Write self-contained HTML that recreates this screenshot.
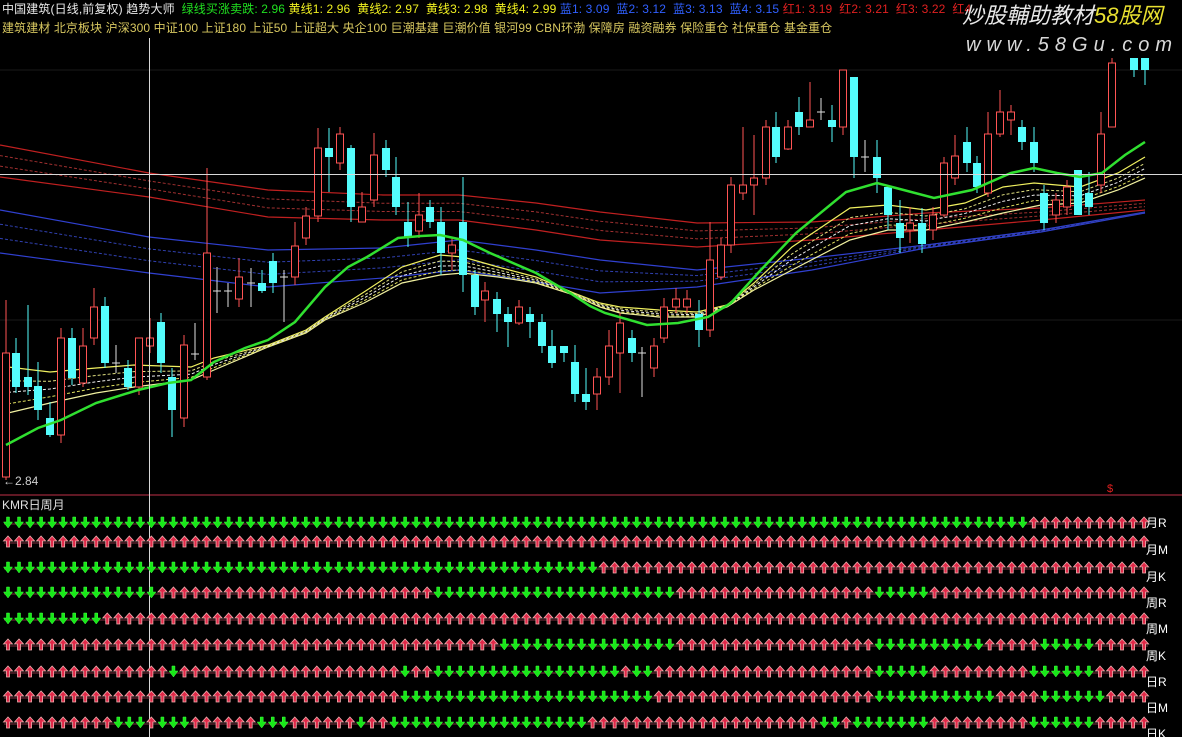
<!DOCTYPE html>
<html><head><meta charset="utf-8">
<style>
html,body{margin:0;padding:0;background:#000;width:1182px;height:737px;overflow:hidden;font-family:"Liberation Sans","Noto Sans CJK SC",sans-serif;}
#wrap{position:relative;width:1182px;height:737px;}
.t{position:absolute;white-space:nowrap;font-size:12px;line-height:14px;}
svg{position:absolute;left:0;top:0;}
</style></head><body><div id="wrap">
<svg id="s" width="1182" height="737" viewBox="0 0 1182 737"></svg>
<div class="t" style="left:2px;top:2px;color:#e8e8e8;letter-spacing:0.12px">中国建筑(日线,前复权) 趋势大师 <span style="color:#20e020">&nbsp;绿线买涨卖跌: 2.96</span> <span style="color:#f0f020">黄线1: 2.96 &nbsp;黄线2: 2.97 &nbsp;黄线3: 2.98 &nbsp;黄线4: 2.99</span> <span style="color:#3060ff">蓝1: 3.09 &nbsp;蓝2: 3.12 &nbsp;蓝3: 3.13 &nbsp;蓝4: 3.15</span> <span style="color:#e02020">红1: 3.19 &nbsp;红2: 3.21 &nbsp;红3: 3.22 &nbsp;红4</span></div>
<div class="t" style="left:2px;top:21px;color:#d8c860;letter-spacing:0.1px">建筑建材 北京板块 沪深300 中证100 上证180 上证50 上证超大 央企100 巨潮基建 巨潮价值 银河99 CBN环渤 保障房 融资融券 保险重仓 社保重仓 基金重仓</div>
<div class="t" style="left:962px;top:3px;font-size:22px;line-height:26px;font-style:italic;color:#e8e8e8">炒股輔助教材<span style="color:#e8e030">58股网</span></div>
<div class="t" style="left:966px;top:33px;font-size:20px;line-height:24px;font-style:italic;color:#d8d8d8;letter-spacing:6px">www.58Gu.com</div>
<div class="t" style="left:3px;top:474px;color:#d0d0d0">←2.84</div>
<div class="t" style="left:2px;top:498px;color:#e0e0e0">KMR日周月</div>
<div class="t" style="left:1107px;top:482px;color:#e02020;font-size:11px">$</div>
<div class="t" style="left:1146px;top:516px;color:#fff">月R</div>
<div class="t" style="left:1146px;top:543px;color:#fff">月M</div>
<div class="t" style="left:1146px;top:570px;color:#fff">月K</div>
<div class="t" style="left:1146px;top:596px;color:#fff">周R</div>
<div class="t" style="left:1146px;top:622px;color:#fff">周M</div>
<div class="t" style="left:1146px;top:649px;color:#fff">周K</div>
<div class="t" style="left:1146px;top:675px;color:#fff">日R</div>
<div class="t" style="left:1146px;top:701px;color:#fff">日M</div>
<div class="t" style="left:1146px;top:727px;color:#fff">日K</div>
</div>
<script>
var S=document.getElementById('s'),h='';
function pl(pts,col,w,dash){h+='<polyline fill="none" stroke="'+col+'" stroke-width="'+w+'"'+(dash?' stroke-dasharray="'+dash+'"':'')+' points="'+pts.map(function(p){return p.join(',')}).join(' ')+'"/>';}
function mix(a,b,t){var r=[];for(var i=0;i<a.length;i++)r.push([a[i][0],a[i][1]+(b[i][1]-a[i][1])*t]);return r;}
h+='<line x1="0" y1="70" x2="1182" y2="70" stroke="#1a1a1a"/><line x1="0" y1="320" x2="1182" y2="320" stroke="#1a1a1a"/>';
h+='<line x1="0" y1="495" x2="1182" y2="495" stroke="#802030" stroke-width="1.5"/>';
var redT=[[0,145],[149,173],[268,190],[383,195],[459,195],[536,203],[600,212],[697,223],[812,222],[926,213],[1041,208],[1145,200]];
var redB=[[0,177],[149,197],[268,217],[383,220],[459,220],[536,230],[600,240],[697,247],[812,240],[926,230],[1041,220],[1145,210]];
var bluT=[[0,210],[149,237],[268,250],[383,248],[459,240],[536,250],[600,260],[697,270],[812,258],[926,245],[1041,230],[1145,212]];
var bluB=[[0,253],[149,273],[268,287],[383,278],[459,270],[536,282],[600,293],[697,287],[812,270],[926,248],[1041,232],[1145,213]];
pl(redT,'#c02020',1.2);pl(redB,'#c02020',1.2);
pl(mix(redT,redB,.33),'#a03030',1,'3,2');pl(mix(redT,redB,.66),'#a03030',1,'3,2');
pl(bluT,'#3040d0',1.2);pl(bluB,'#3040d0',1.2);
pl(mix(bluT,bluB,.33),'#3040b0',1,'3,2');pl(mix(bluT,bluB,.66),'#3040b0',1,'3,2');
var yT=[[8,367],[50,372],[96,368],[134,365],[191,367],[214,358],[268,345],[306,330],[325,317],[364,292],[402,267],[440,255],[463,257],[498,267],[536,277],[574,293],[600,303],[620,307],[659,310],[697,312],[727,305],[754,283],[792,247],[850,208],[888,205],[926,210],[965,203],[1003,187],[1034,183],[1080,187],[1118,173],[1145,157]];
var yB=[[8,413],[50,403],[96,393],[134,387],[191,380],[214,370],[268,347],[306,333],[325,320],[364,303],[402,283],[440,275],[463,273],[498,277],[536,283],[574,295],[600,307],[620,313],[659,317],[697,317],[727,307],[754,290],[792,270],[850,240],[888,230],[926,230],[965,222],[1003,213],[1041,205],[1080,203],[1118,190],[1145,178]];
pl(yT,'#f0f060',1.2);pl(yB,'#f0f0a0',1.2);
pl(mix(yT,yB,.3),'#e0e080',1,'3,2');pl(mix(yT,yB,.55),'#f0f0f0',1,'3,2');pl(mix(yT,yB,.8),'#e0e060',1,'3,2');
var C=[
[6,'r',353,477,300,480],[16,'c',353,387,338,393],[28,'c',377,387,305,395],[38,'c',386,410,362,420],[50,'c',418,435,402,437],
[61,'r',338,435,328,443],[72,'c',338,378,328,385],[83,'r',346,383,328,387],[94,'r',307,338,288,345],[105,'c',306,363,297,368],
[116,'x',363,363,345,373],[128,'c',368,387,360,390],[139,'r',338,387,338,395],[150,'r',338,346,318,353],[161,'c',322,363,313,373],
[172,'c',377,410,368,437],[184,'r',345,418,335,427],[195,'x',354,354,323,360],[207,'r',253,377,168,380],[217,'x',291,291,267,313],
[228,'x',291,291,283,307],[239,'r',277,299,258,307],[251,'x',283,283,268,307],[262,'c',283,291,270,293],[273,'c',261,283,253,293],
[284,'x',277,277,270,322],[295,'r',246,277,222,285],[306,'r',216,238,207,245],[318,'r',148,216,128,222],[329,'c',148,157,128,192],
[340,'r',134,163,127,170],[351,'c',148,207,145,222],[362,'r',207,222,192,222],[374,'r',155,200,133,207],[386,'c',148,170,140,177],
[396,'c',177,207,157,215],[408,'c',222,238,202,247],[419,'r',215,231,193,238],[430,'c',207,222,200,228],[441,'c',222,253,207,275],
[452,'r',245,253,238,270],[463,'c',222,275,177,292],[475,'c',275,307,270,315],[485,'r',291,300,282,322],[497,'c',299,314,292,332],
[508,'c',314,322,307,347],[519,'r',307,323,300,325],[530,'c',314,322,307,338],[542,'c',322,346,314,353],[552,'c',346,363,330,368],
[564,'c',346,353,346,362],[575,'c',362,394,345,402],[586,'c',394,402,368,410],[597,'r',377,394,368,410],[609,'r',346,377,330,385],
[620,'r',323,353,313,393],[632,'c',338,353,330,362],[642,'x',353,353,347,397],[654,'r',346,368,338,377],[664,'r',307,338,298,343],
[676,'r',299,307,288,313],[687,'r',299,307,290,313],[699,'c',314,330,300,347],[710,'r',260,330,222,337],[721,'r',245,277,238,280],
[731,'r',185,245,177,253],[743,'r',185,193,127,200],[754,'r',178,185,135,215],[766,'r',127,178,120,185],[776,'c',127,157,112,163],
[788,'r',127,149,120,150],[799,'c',112,127,97,135],[810,'r',120,127,82,127],[821,'x',112,112,98,120],[832,'c',120,127,105,142],
[843,'r',70,127,70,135],[854,'c',77,157,77,178],[865,'x',157,157,140,172],[877,'c',157,178,140,193],[888,'c',187,215,185,230],
[900,'c',223,238,200,253],[910,'r',223,230,207,243],[922,'c',223,244,208,253],[933,'r',215,230,207,240],[944,'r',163,215,157,217],
[955,'r',156,178,135,185],[967,'c',142,163,127,172],[977,'c',163,187,156,193],[988,'r',134,193,112,197],[1000,'r',112,134,90,137],
[1011,'r',112,120,105,135],[1022,'c',127,142,120,150],[1034,'c',142,163,127,172],[1044,'c',193,223,185,230],[1056,'r',200,215,193,223],
[1067,'r',187,207,180,215],[1078,'c',170,215,170,215],[1089,'c',193,207,172,215],[1101,'r',134,185,112,193],[1112,'r',63,127,58,127],
[1134,'c',58,70,58,77],[1145,'c',58,70,58,85]];
C.forEach(function(c){var x=c[0],t=c[1],o=c[2],b=c[3],hi=c[4],lo=c[5];
 var col=t=='r'?'#ff5454':(t=='c'?'#54fcfc':'#e0e0e0');
 h+='<line x1="'+x+'" y1="'+hi+'" x2="'+x+'" y2="'+lo+'" stroke="'+col+'"/>';
 if(t=='x')h+='<line x1="'+(x-4)+'" y1="'+o+'" x2="'+(x+4)+'" y2="'+o+'" stroke="'+col+'"/>';
 else if(t=='r')h+='<rect x="'+(x-3.5)+'" y="'+o+'" width="7" height="'+Math.max(1,b-o)+'" fill="#000" stroke="'+col+'"/>';
 else h+='<rect x="'+(x-4)+'" y="'+o+'" width="8" height="'+Math.max(2,b-o)+'" fill="'+col+'"/>';});
var G=[[6,445],[38,428],[61,420],[96,403],[138,390],[168,383],[191,380],[214,362],[245,348],[268,340],[295,322],[325,287],[348,267],[367,257],[398,238],[421,236],[440,235],[463,240],[490,253],[536,273],[570,293],[590,306],[605,313],[647,325],[678,323],[708,317],[731,303],[758,273],[796,233],[846,192],[877,183],[896,188],[934,198],[972,190],[1011,173],[1034,168],[1057,173],[1080,177],[1102,173],[1125,155],[1145,142]];
pl(G,'#30e030',2.5);
h+='<line x1="149.5" y1="38" x2="149.5" y2="737" stroke="#d8d8d8"/><line x1="0" y1="174.5" x2="1182" y2="174.5" stroke="#d8d8d8"/>';
var RY=[523,542,568,593,619,645,672,697,723];
var GR=[[[0,1030]],[],[[0,602]],[[0,152],[436,678],[872,925]],[[0,98]],[[494,678],[872,982],[1040,1093]],
[[168,175],[403,409],[436,615],[628,655],[696,702],[872,934],[1030,1093]],[[403,655],[872,991],[1040,1102]],
[[113,145],[160,190],[258,290],[360,364],[392,590],[818,836],[852,934],[1030,1093]]];
function isG(r,x){var g=GR[r];for(var k=0;k<g.length;k++)if(x>=g[k][0]&&x<=g[k][1])return true;return false;}
for(var r=0;r<9;r++){var y=RY[r];
 h+='<line x1="4" y1="'+(y+1)+'" x2="1148" y2="'+(y+1)+'" stroke="#803040" stroke-width="1"/>';
 for(var i=0;i<104;i++){var x=8+11.03*i;
  if(isG(r,x)){h+='<path d="M'+(x-1.5)+' '+(y-6)+'h3v5h3l-4.5 6l-4.5-6h3z" fill="#18e818" stroke="#40ff40" stroke-width=".5"/>';}
  else{h+='<path d="M'+x+' '+(y-6)+'l4.5 5h-3v6h-3v-6h-3z" fill="#e02848" stroke="#f0b0b0" stroke-width=".8"/>';}
 }}
S.innerHTML=h;
</script>
</body></html>
